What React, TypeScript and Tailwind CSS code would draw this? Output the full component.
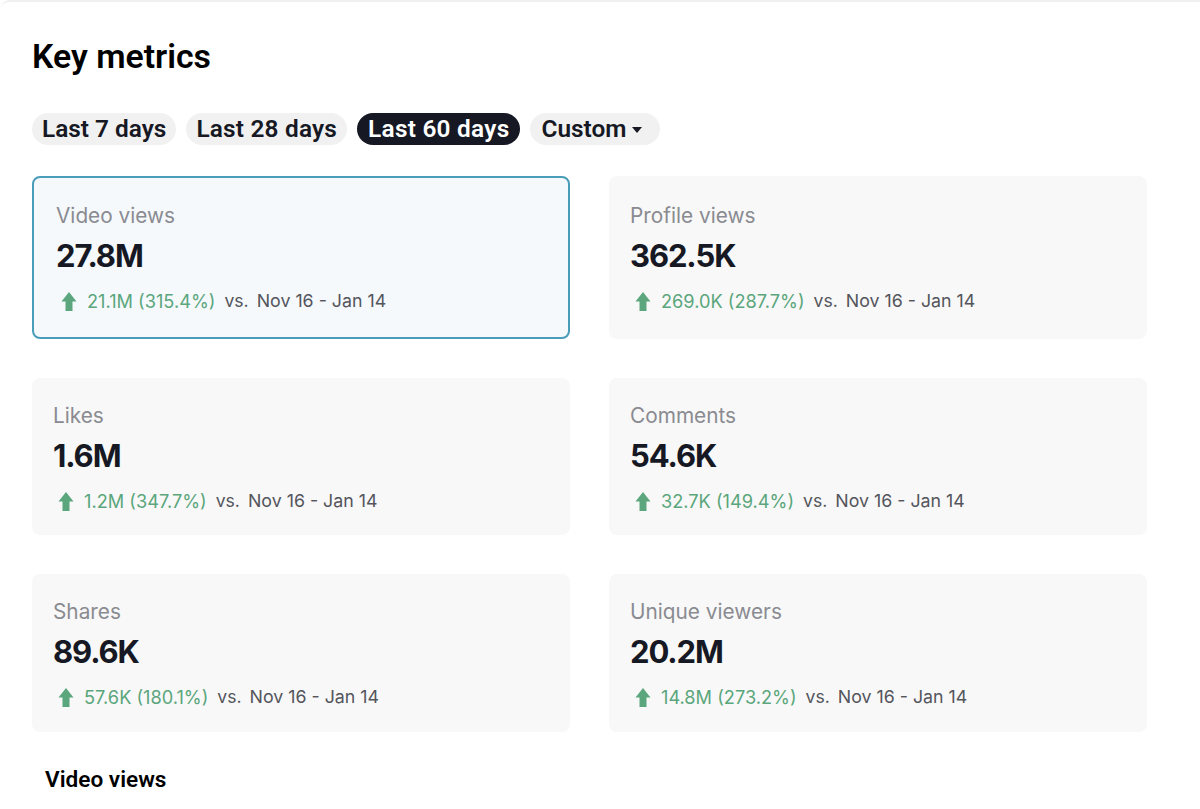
import { type ReactNode } from 'react';

type Metric = {
  label: string;
  value: string;
  delta: string;
  active?: boolean;
  pad: string;
  height: string;
};

const metrics: Metric[] = [
  { label: 'Video views', value: '27.8M', delta: '21.1M (315.4%)', active: true, pad: 'px-[22px] pt-[25px]', height: 'h-[163px]' },
  { label: 'Profile views', value: '362.5K', delta: '269.0K (287.7%)', pad: 'px-[21px] pt-[27px]', height: 'h-[163px]' },
  { label: 'Likes', value: '1.6M', delta: '1.2M (347.7%)', pad: 'px-[21px] pt-[25px]', height: 'h-[157px]' },
  { label: 'Comments', value: '54.6K', delta: '32.7K (149.4%)', pad: 'px-[21px] pt-[25px]', height: 'h-[157px]' },
  { label: 'Shares', value: '89.6K', delta: '57.6K (180.1%)', pad: 'px-[21px] pt-[25px]', height: 'h-[158px]' },
  { label: 'Unique viewers', value: '20.2M', delta: '14.8M (273.2%)', pad: 'px-[21px] pt-[25px]', height: 'h-[158px]' },
];

function Pill({ children, active, className }: { children: ReactNode; active?: boolean; className: string }) {
  return (
    <button
      className={`flex h-[32px] items-center rounded-full pt-[1px] font-['Roboto',sans-serif] text-[24.4px] font-semibold ${className} ${
        active ? 'bg-[#161823] text-white' : 'bg-[#f1f1f2] text-[#161823]'
      }`}
    >
      {children}
    </button>
  );
}

function UpArrow() {
  return (
    <svg width="16" height="19" viewBox="0 0 16 19" className="shrink-0">
      <path d="M8 0 L15.5 9.5 H11.5 V19 H4.5 V9.5 H0.5 Z" fill="#5ba67c" />
    </svg>
  );
}

function MetricCard({ label, value, delta, active, pad, height }: Metric) {
  return (
    <div
      className={`${height} ${pad} rounded-[8px] ${
        active ? 'border-[2px] border-[#4a9db8] bg-[#f5f9fc]' : 'bg-[#f8f8f8]'
      }`}
    >
      <div className="text-[20.8px] leading-[26px] text-[#8a8b91]">{label}</div>
      <div className="mt-[8px] text-[31px] leading-[38px] font-bold tracking-[-1.1px] text-[#161823]">{value}</div>
      <div className="mt-[14px] flex items-center leading-[24px]">
        <span className="ml-[5px] mr-[10px]">
          <UpArrow />
        </span>
        <span className="text-[18.2px] text-[#5ba67c]">{delta}</span>
        <span className="ml-[9px] text-[17.6px] text-[#54555c]">vs.</span>
        <span className="ml-[8px] text-[17.8px] text-[#54555c]">Nov 16 - Jan 14</span>
      </div>
    </div>
  );
}

export default function App() {
  return (
    <div className="h-[809px] w-[1200px] overflow-hidden bg-white font-['Inter',sans-serif]">
      <div className="h-full rounded-tl-[10px] border-t-[2px] border-[#f0f0f0] px-[32px] pt-[36px]">
        <h1 className="font-['Roboto',sans-serif] text-[33.8px] leading-[38px] font-semibold text-black">Key metrics</h1>
        <div className="mt-[37px] flex gap-[10px]">
          <Pill className="px-[10px]">Last 7 days</Pill>
          <Pill className="px-[10px] tracking-[0.2px]">Last 28 days</Pill>
          <Pill active className="px-[11px] tracking-[0.25px]">Last 60 days</Pill>
          <Pill className="pl-[11px] pr-[18px]">
            Custom
            <svg width="10" height="6" viewBox="0 0 10 6" className="ml-[6px]">
              <path d="M0 0 H10 L5 6 Z" fill="#161823" />
            </svg>
          </Pill>
        </div>
        <div className="mt-[31px] grid w-[1115px] grid-cols-2 gap-[39px]">
          {metrics.map((metric) => (
            <MetricCard key={metric.label} {...metric} />
          ))}
        </div>
        <div className="ml-[13px] mt-[35px] font-['Roboto',sans-serif] text-[22.6px] leading-[26px] font-semibold text-black">Video views</div>
      </div>
    </div>
  );
}
